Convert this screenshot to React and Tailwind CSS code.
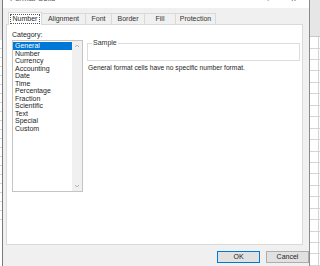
import React from "react";

const items = ["General","Number","Currency","Accounting","Date","Time","Percentage","Fraction","Scientific","Text","Special","Custom"];
const tabs = [
  { label: "Number", w: 34, sel: true },
  { label: "Alignment", w: 44 },
  { label: "Font", w: 26 },
  { label: "Border", w: 33 },
  { label: "Fill", w: 31 },
  { label: "Protection", w: 40 },
];

export default function App() {
  const rightRows = Array.from({ length: 20 });
  return (
    <div className="w-[320px] h-[266px] overflow-hidden flex bg-white text-[#1e1e1e]" style={{ fontFamily: '"Liberation Sans", Arial, sans-serif' }}>
      {/* left sheet strip */}
      <div className="w-[3px] h-full flex flex-col bg-white border-r border-[#7a7a7a]">
        <div className="h-[40px] bg-[#e6e6e6]" />
        {rightRows.map((_, i) => (
          <div key={i} className="h-[9px] border-b border-[#d4d4d4]" />
        ))}
      </div>
      {/* dialog */}
      <div className="w-[306px] h-full flex flex-col bg-[#f0f0f0]">
        {/* title bar */}
        <div className="h-[8px] bg-white relative overflow-hidden">
          <span className="absolute left-[7px] top-[-5px] text-[8px] leading-[8px] text-[#555]">Format Cells</span>
          <span className="absolute left-[263px] top-[-5px] text-[8px] leading-[8px] text-[#555]">?</span>
          <span className="absolute left-[288px] top-[-5px] text-[9px] leading-[8px] text-[#555]">×</span>
        </div>
        {/* tabs */}
        <div className="flex items-end pl-[5px] mt-[4px] h-[12px] text-[7px]">
          {tabs.map((t) =>
            t.sel ? (
              <div key={t.label} className="h-[13px] bg-white border border-b-0 border-[#d9d9d9] flex items-center justify-center relative z-10 mb-[-1px]" style={{ width: t.w }}>
                <span className="border border-dotted border-[#555] px-[2px] leading-[8px]">{t.label}</span>
              </div>
            ) : (
              <div key={t.label} className="h-[11px] border border-b-0 border-l-0 border-[#d9d9d9] flex items-center justify-center text-[#333]" style={{ width: t.w }}>
                {t.label}
              </div>
            )
          )}
        </div>
        {/* panel */}
        <div className="ml-[3px] w-[297px] h-[221px] bg-white border border-[#d9d9d9] relative text-[7px]">
          <div className="absolute left-[5px] top-[6px] leading-[8px]">Category:</div>
          {/* listbox */}
          <div className="absolute left-[5px] top-[15px] w-[71px] h-[152px] border border-[#c4c4c4] flex">
            <div className="flex-1 flex flex-col pt-[1px]">
              {items.map((it, i) => (
                <div key={it} className={`h-[7.5px] leading-[7.5px] pl-[2px] ${i === 0 ? "bg-[#0078d7] text-white" : ""}`}>
                  {it}
                </div>
              ))}
            </div>
            <div className="w-[10px] bg-[#f0f0f0] flex flex-col justify-between items-center">
              <svg width="6" height="6" viewBox="0 0 6 6" className="mt-[2px]"><path d="M1 4 L3 2 L5 4" fill="none" stroke="#a6a6a6" strokeWidth="0.8" /></svg>
              <svg width="6" height="6" viewBox="0 0 6 6" className="mb-[2px]"><path d="M1 2 L3 4 L5 2" fill="none" stroke="#a6a6a6" strokeWidth="0.8" /></svg>
            </div>
          </div>
          {/* sample group */}
          <div className="absolute left-[80px] top-[18px] w-[213px] h-[18px] border border-[#dcdcdc]">
            <span className="absolute left-[4px] top-[-5px] bg-white px-[1px] leading-[8px] text-[#333]">Sample</span>
          </div>
          <div className="absolute left-[81px] top-[39px] leading-[8px] text-[6.7px]">General format cells have no specific number format.</div>
        </div>
        {/* buttons */}
        <div className="flex justify-end gap-[6px] mt-[6px] text-[7px]">
          <button className="w-[43px] h-[12px] bg-[#e1e1e1] border border-[#0078d7] flex items-center justify-center">OK</button>
          <button className="w-[43px] h-[12px] bg-[#e1e1e1] border border-[#adadad] flex items-center justify-center">Cancel</button>
        </div>
      </div>
      {/* right sheet strip */}
      <div className="flex-1 h-full flex flex-col border-l border-[#8a8a8a] bg-white">
        <div className="h-[38px] bg-[#e6e6e6] border-b border-[#c8c8c8]" />
        {rightRows.map((_, i) => (
          <div key={i} className="h-[11.7px] border-b border-[#d4d4d4] flex justify-end">
            <div className="w-[2px] border-l border-[#d4d4d4]" />
          </div>
        ))}
      </div>
    </div>
  );
}
